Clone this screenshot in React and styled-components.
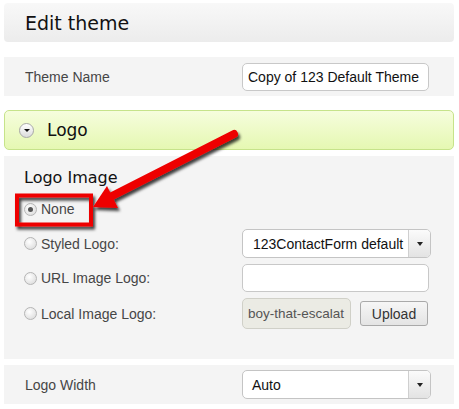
import React from "react"
import styled, { createGlobalStyle } from "styled-components"

const GlobalStyle = createGlobalStyle`
  body {
    margin: 0;
    background: #fff;
    font-family: "Liberation Sans", Arial, sans-serif;
  }
`

const Page = styled.div`
  position: relative;
  width: 450px;
  padding: 3px 5px 4px 4px;
  display: flex;
  flex-direction: column;
`

const Header = styled.div`
  height: 39px;
  border-radius: 4px;
  background: linear-gradient(#f8f8f8, #ececec);
  display: flex;
  align-items: center;
  padding-left: 21px;
  font-family: "DejaVu Sans", Verdana, sans-serif;
  font-size: 19px;
  color: #111;
`

const Row = styled.div`
  height: 39px;
  margin-top: ${p => p.$mt || 0}px;
  background: #f4f4f4;
  display: flex;
  align-items: center;
  padding-left: 21px;
`

const Label = styled.div`
  width: 217px;
  font-size: 14px;
  color: #464646;
`

const TextInput = styled.div`
  width: 187px;
  height: ${p => p.$h || 28}px;
  box-sizing: border-box;
  border: 1px solid #c8c8c8;
  border-radius: 5px;
  background: #fff;
  font-size: 14px;
  color: #111;
  display: flex;
  align-items: center;
  padding-left: 5px;
  white-space: nowrap;
  overflow: hidden;
`

const Select = styled.div`
  width: 189px;
  height: 29px;
  box-sizing: border-box;
  border: 1px solid #c4c4c4;
  border-radius: 5px;
  background: #fff;
  display: flex;
  overflow: hidden;
`

const SelectText = styled.div`
  flex: 1;
  display: flex;
  align-items: center;
  padding-left: ${p => p.$pl || 9}px;
  font-size: 14px;
  color: #111;
  white-space: nowrap;
  overflow: hidden;
`

const SelectButton = styled.div`
  width: 21px;
  border-left: 1px solid #cfcfcf;
  background: linear-gradient(#fbfbfb, #e3e3e3);
  display: flex;
  align-items: center;
  justify-content: center;
  &::after {
    content: "";
    border-left: 3px solid transparent;
    border-right: 3px solid transparent;
    border-top: 4px solid #222;
  }
`

const Bar = styled.div`
  height: 38px;
  margin-top: 14px;
  border: 1px solid #c6e38a;
  border-radius: 5px;
  background: linear-gradient(#f6fddd, #e5f8b2);
  display: flex;
  align-items: center;
  padding-left: 14px;
  gap: 13px;
  font-family: "DejaVu Sans", Verdana, sans-serif;
  font-size: 17px;
  color: #111;
`

const Toggle = styled.div`
  width: 13px;
  height: 13px;
  border-radius: 50%;
  border: 1px solid #a8a8a8;
  background: linear-gradient(#ffffff, #dcdcdc);
  display: flex;
  align-items: center;
  justify-content: center;
  &::after {
    content: "";
    margin-top: 1px;
    border-left: 3px solid transparent;
    border-right: 3px solid transparent;
    border-top: 3px solid #111;
  }
`

const Section = styled.div`
  margin-top: 6px;
  background: #f4f4f4;
  padding: 12px 23px 30px 20px;
  display: flex;
  flex-direction: column;
`

const SectionTitle = styled.div`
  font-family: "DejaVu Sans", Verdana, sans-serif;
  font-size: 16px;
  line-height: 20px;
  color: #111;
`

const Option = styled.div`
  display: flex;
  align-items: center;
  min-height: 22px;
  margin-top: ${p => p.$mt || 6}px;
`

const OptionLabel = styled.label`
  width: 218px;
  display: flex;
  align-items: center;
  gap: 4px;
  font-size: 14px;
  color: #464646;
`

const Radio = styled.span`
  width: 11px;
  height: 11px;
  border-radius: 50%;
  border: 1px solid #b5b5b5;
  background: radial-gradient(circle at 40% 35%, #ffffff, #d6d6d6);
  display: inline-flex;
  align-items: center;
  justify-content: center;
  &::after {
    content: "";
    width: 5px;
    height: 5px;
    border-radius: 50%;
    background: ${p => (p.$checked ? "#555" : "transparent")};
  }
`

const FileRow = styled.div`
  display: flex;
  align-items: center;
  gap: 9px;
`

const FileField = styled.div`
  width: 109px;
  height: 31px;
  box-sizing: border-box;
  border: 1px solid #d0d0c8;
  border-radius: 5px;
  background: #ebebe4;
  font-size: 13.5px;
  color: #555;
  display: flex;
  align-items: center;
  padding-left: 5px;
  white-space: nowrap;
  overflow: hidden;
`

const Button = styled.div`
  width: 68px;
  height: 25px;
  box-sizing: border-box;
  border: 1px solid #a9a9a9;
  border-radius: 3px;
  background: linear-gradient(#f6f6f6, #e4e4e4);
  font-size: 14px;
  color: #333;
  display: flex;
  align-items: center;
  justify-content: center;
`

const Annotation = styled.svg`
  position: absolute;
  left: 0;
  top: 0;
  pointer-events: none;
`

export default function App() {
  return (
    <>
      <GlobalStyle />
      <Page>
        <Header>Edit theme</Header>
        <Row $mt={15}>
          <Label>Theme Name</Label>
          <TextInput>Copy of 123 Default Theme</TextInput>
        </Row>
        <Bar>
          <Toggle />
          Logo
        </Bar>
        <Section>
          <SectionTitle>Logo Image</SectionTitle>
          <Option $mt={10}>
            <OptionLabel>
              <Radio $checked />
              None
            </OptionLabel>
          </Option>
          <Option $mt={9}>
            <OptionLabel>
              <Radio />
              Styled Logo:
            </OptionLabel>
            <Select>
              <SelectText $pl={10}>123ContactForm default</SelectText>
              <SelectButton />
            </Select>
          </Option>
          <Option>
            <OptionLabel>
              <Radio />
              URL Image Logo:
            </OptionLabel>
            <TextInput $h={28} />
          </Option>
          <Option>
            <OptionLabel>
              <Radio />
              Local Image Logo:
            </OptionLabel>
            <FileRow>
              <FileField>boy-that-escalat</FileField>
              <Button>Upload</Button>
            </FileRow>
          </Option>
        </Section>
        <Row $mt={6}>
          <Label>Logo Width</Label>
          <Select>
            <SelectText>Auto</SelectText>
            <SelectButton />
          </Select>
        </Row>
        <Annotation width="459" height="409">
          <defs>
            <filter id="shadow" x="-20%" y="-20%" width="140%" height="140%">
              <feDropShadow dx="2" dy="3" stdDeviation="1.5" floodColor="#000" floodOpacity="0.75" />
            </filter>
          </defs>
          <g filter="url(#shadow)">
            <rect x="17" y="195.5" width="74" height="29" fill="none" stroke="#ee0000" strokeWidth="4" />
            <line x1="234" y1="134" x2="110" y2="197" stroke="#ee0000" strokeWidth="8" strokeLinecap="round" />
            <polygon points="93,207 107,186 118,208" fill="#ee0000" />
          </g>
        </Annotation>
      </Page>
    </>
  )
}
